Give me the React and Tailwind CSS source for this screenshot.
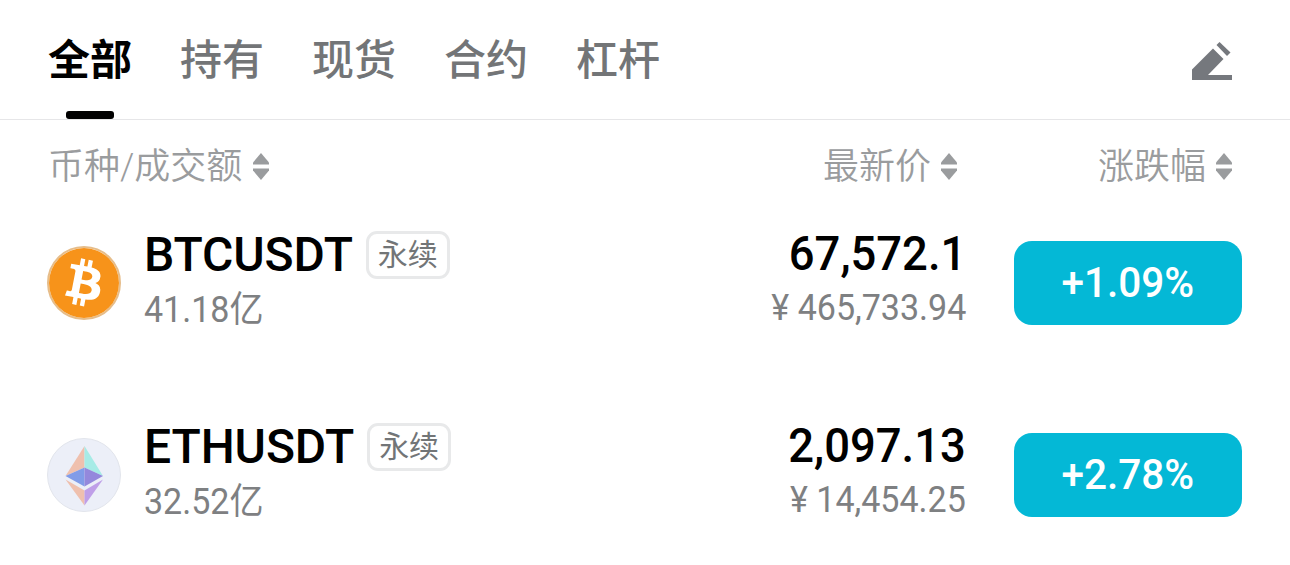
import { useState } from "react";
import { clsx } from "clsx";
import { SiBitcoin } from "react-icons/si";

const TABS = ["全部", "持有", "现货", "合约", "杠杆"];

const COINS = [
  {
    symbol: "BTCUSDT",
    type: "永续",
    volume: "41.18亿",
    price: "67,572.1",
    fiat: "465,733.94",
    change: "+1.09%",
    Icon: BtcIcon,
  },
  {
    symbol: "ETHUSDT",
    type: "永续",
    volume: "32.52亿",
    price: "2,097.13",
    fiat: "14,454.25",
    change: "+2.78%",
    Icon: EthIcon,
  },
];

function BtcIcon() {
  return (
    <div className="flex size-[74px] items-center justify-center overflow-hidden rounded-full border-2 border-[#e6bd8a] bg-white">
      <SiBitcoin className="size-[76px] shrink-0 -rotate-3 text-[#f7931a]" />
    </div>
  );
}

function EthIcon() {
  return (
    <svg viewBox="0 0 74 74" className="size-[74px]">
      <circle cx="37" cy="37" r="36.5" fill="#eceff8" stroke="#e2e5ec" />
      <path d="M37.5 8 18.5 38 37.5 29.5Z" fill="#efc0ae" />
      <path d="M37.5 8 56 38 37.5 29.5Z" fill="#a6ebe6" />
      <path d="M37.5 29.5 18.5 38 37.5 48.5Z" fill="#819ce8" />
      <path d="M37.5 29.5 56 38 37.5 48.5Z" fill="#9488dc" />
      <path d="M18.5 41.5 37.5 52.5V67.5Z" fill="#efc0ae" />
      <path d="M56 41.5 37.5 52.5V67.5Z" fill="#bf9fe8" />
    </svg>
  );
}

function EditIcon() {
  return (
    <svg viewBox="0 0 40 38" className="h-[38px] w-10" fill="#75787d">
      <path d="M0 38V27.5L21 6.5 31.5 17 16 33H40V38Z" />
      <path d="M27.5 0 38.5 10.5 35 14 24.5 3Z" />
    </svg>
  );
}

function SortIcon() {
  return (
    <svg viewBox="0 0 16 27" className="h-[27px] w-4" fill="#9a9c9e">
      <path d="M8 0 16 9.5V11.5H0V9.5Z" />
      <path d="M8 27 16 17.5V15.5H0V17.5Z" />
    </svg>
  );
}

function SortHeader({ label, className }) {
  return (
    <button className={clsx("flex items-center", className)}>
      <span>{label}</span>
      <SortIcon />
    </button>
  );
}

function CoinRow({ coin }) {
  const { Icon } = coin;
  return (
    <div className="flex h-48 items-center pr-12 pl-[47px]">
      <Icon />
      <div className="ml-[23px] flex flex-1 flex-col items-start pb-[5px]">
        <div className="flex h-14 items-center gap-[13px]">
          <span className="text-5xl font-medium tracking-[-0.1px] text-black">{coin.symbol}</span>
          <span className="flex h-12 w-[84px] items-center justify-center rounded-[11px] border-3 border-[#e8e9ea] text-[30px] text-[#727577]">
            {coin.type}
          </span>
        </div>
        <span className="h-[52px] origin-left scale-x-[.945] text-4xl leading-[54px] text-[#7e8082]">
          {coin.volume}
        </span>
      </div>
      <div className="mr-12 flex origin-right scale-x-[.945] flex-col items-end pb-[6px]">
        <span className="h-14 text-5xl leading-14 font-medium text-black">{coin.price}</span>
        <span className="h-[52px] text-4xl leading-[52px] text-[#7e8082]">¥ {coin.fiat}</span>
      </div>
      <div className="flex h-[84px] w-[228px] items-center justify-center rounded-[18px] bg-[#04b8d6] pb-[2px] text-[42px] font-medium text-white">
        <span className="scale-x-[.965]">{coin.change}</span>
      </div>
    </div>
  );
}

export default function App() {
  const [active, setActive] = useState(TABS[0]);

  return (
    <div className="h-[565px] w-[1290px] overflow-hidden bg-white font-[Roboto,'Noto_Sans_CJK_SC',sans-serif]">
      <nav className="flex h-[120px] items-stretch justify-between border-b border-[#e6e6e8] pr-[58px] pl-12">
        <div className="flex gap-12">
          {TABS.map((tab) => (
            <button
              key={tab}
              onClick={() => setActive(tab)}
              className={clsx(
                "flex flex-col items-center justify-between text-[42px] leading-[122px]",
                active === tab ? "font-bold text-black" : "font-medium text-[#737577]"
              )}
            >
              <span className="h-[111px]">{tab}</span>
              {active === tab && <span className="h-2 w-12 rounded-[3px] bg-black" />}
            </button>
          ))}
        </div>
        <button className="mt-[42px] self-start">
          <EditIcon />
        </button>
      </nav>

      <div className="flex h-[67px] items-center pt-[26px] pr-[58px] pl-12 text-4xl font-[350] text-[#9a9c9e]">
        <SortHeader label="币种/成交额" className="gap-[11px]" />
        <SortHeader label="最新价" className="ml-auto gap-[10px]" />
        <SortHeader label="涨跌幅" className="ml-[141px] gap-[10px]" />
      </div>

      {COINS.map((coin) => (
        <CoinRow key={coin.symbol} coin={coin} />
      ))}
    </div>
  );
}
